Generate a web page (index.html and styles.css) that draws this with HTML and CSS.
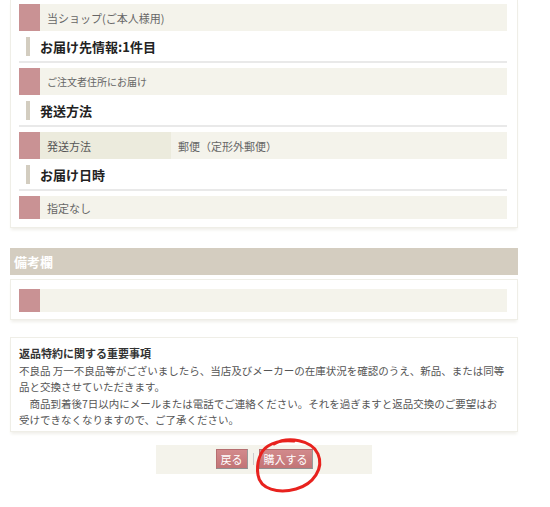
FILE: index.html
```html
<!DOCTYPE html>
<html lang="ja">

<head>
    <meta charset="UTF-8">
    <meta name="viewport" content="width=device-width, initial-scale=1.0">
    <link rel="stylesheet" href="styles.css">
    <title>ご注文内容の確認</title>
</head>

<body>

    <div class="page">

        <div class="panel panel-top">
            <div class="row">
                <span class="mark"></span>
                <span class="cell">当ショップ(ご本人様用)</span>
            </div>

            <h3 class="heading">お届け先情報:1件目</h3>
            <div class="row">
                <span class="mark"></span>
                <span class="cell small">ご注文者住所にお届け</span>
            </div>

            <h3 class="heading">発送方法</h3>
            <div class="row">
                <span class="mark"></span>
                <span class="cell label">発送方法</span>
                <span class="cell">郵便（定形外郵便）</span>
            </div>

            <h3 class="heading">お届け日時</h3>
            <div class="row row-short">
                <span class="mark"></span>
                <span class="cell">指定なし</span>
            </div>
        </div>

        <h2 class="section-title">備考欄</h2>
        <div class="panel panel-remarks">
            <div class="row row-short">
                <span class="mark"></span>
                <span class="cell"></span>
            </div>
        </div>

        <div class="panel notice">
            <h4>返品特約に関する重要事項</h4>
            <p>不良品 万一不良品等がございましたら、当店及びメーカーの在庫状況を確認のうえ、新品、または同等品と交換させていただきます。<br>
                &#12288;商品到着後7日以内にメールまたは電話でご連絡ください。それを過ぎますと返品交換のご要望はお受けできなくなりますので、ご了承ください。</p>
        </div>

        <div class="actions">
            <button type="button" class="btn">戻る</button>
            <span class="sep"></span>
            <button type="button" class="btn">購入する</button>
            <!-- hand-drawn marker around the purchase button -->
            <svg class="scribble" viewBox="0 0 70 58">
                <path d="M20 7 C 34 -1, 58 3, 64 17 C 70 31, 60 47, 42 52 C 24 57, 6 52, 4 38 C 2 26, 6 14, 14 9 C 20 5, 30 3, 40 4"
                    fill="none" stroke="#e8221e" stroke-width="3" stroke-linecap="round" />
            </svg>
        </div>

    </div>

</body>

</html>
```

FILE: styles.css
```css
body {
    margin: 0;
    padding: 0;
    background: #fff;
    font-family: "Noto Sans CJK JP", "Noto Sans", sans-serif;
    color: #555;
}

.page {
    width: 508px;
    margin-left: 10px;
    padding-bottom: 30px;
}

.panel {
    background: #fff;
    border: 1px solid #efeee7;
    box-shadow: 0 3px 3px -1px #f0efea;
    padding: 0 10px 0 8px;
}

.panel-top {
    border-top: none;
    padding-top: 4px;
    padding-bottom: 8px;
}

.row {
    display: flex;
    height: 27px;
    background: #f4f3eb;
}

.row-short {
    height: 23px;
}

.mark {
    width: 21px;
    flex: 0 0 21px;
    background: #c99294;
}

.cell {
    display: flex;
    align-items: center;
    padding-left: 7px;
    font-size: 11px;
    color: #666;
}

.cell.small {
    font-size: 10px;
}

.cell.label {
    width: 124px;
    flex: 0 0 124px;
    background: #ecebdd;
    color: #555;
}

.heading {
    margin: 0 0 5px 0;
    height: 30px;
    border-bottom: 2px solid #e9e9e9;
    display: flex;
    align-items: center;
    padding-left: 7px;
    font-size: 13px;
    font-weight: bold;
    color: #222;
}

.heading::before {
    content: "";
    width: 4px;
    height: 19px;
    background: #d3cdc0;
    margin-right: 10px;
}

.section-title {
    margin: 20px 0 4px 0;
    height: 27px;
    line-height: 27px;
    background: #d4cdc0;
    color: #fff;
    font-size: 13px;
    font-weight: bold;
    padding-left: 4px;
}

.panel-remarks {
    padding-top: 9px;
    padding-bottom: 7px;
}

.notice {
    margin-top: 17px;
    padding: 6px 10px 2px 8px;
}

.notice h4 {
    margin: 0 0 1px 0;
    font-size: 11px;
    font-weight: bold;
    color: #333;
    line-height: 18px;
}

.notice p {
    margin: 0;
    font-size: 10.5px;
    line-height: 16.4px;
    color: #555;
}

.actions {
    position: relative;
    width: 216px;
    height: 29px;
    margin: 13px auto 0;
    background: #f4f3eb;
    display: flex;
    justify-content: center;
    align-items: center;
    gap: 5px;
}

.btn {
    height: 20px;
    padding: 0 4px;
    border: 1px solid #b66e70;
    border-bottom-color: #8f8f8f;
    border-right-color: #999;
    background: linear-gradient(#d28a8c, #c27476);
    color: #fff;
    font-family: "Noto Sans CJK JP", sans-serif;
    font-size: 11px;
    line-height: 18px;
    cursor: pointer;
}

.sep {
    width: 1px;
    height: 12px;
    background: #ccc;
}

.scribble {
    position: absolute;
    left: 98px;
    top: -8px;
    width: 70px;
    height: 58px;
    overflow: visible;
    pointer-events: none;
}
```
